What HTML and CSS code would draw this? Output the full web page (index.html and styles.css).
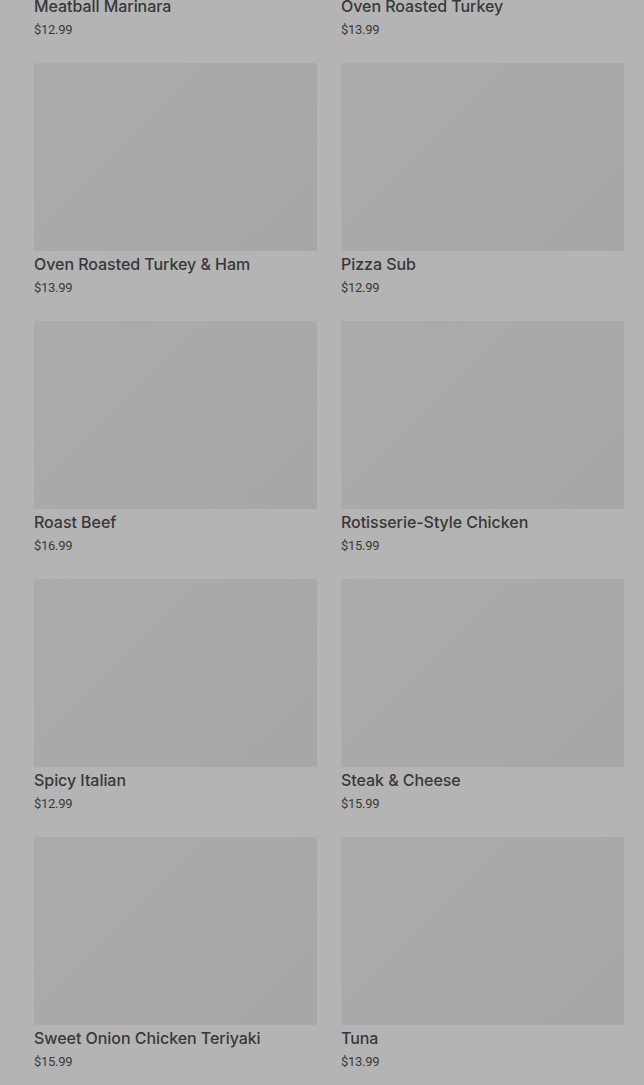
FILE: index.html
```html
<!DOCTYPE html>
<html>
<head>
<meta charset="utf-8">
<link rel="stylesheet" href="styles.css">
</head>
<body>
<main class="page">
  <div class="grid">
    <div class="card"><div class="thumb"></div><div class="name">Meatball Marinara</div><div class="price">$12.99</div></div>
    <div class="card"><div class="thumb"></div><div class="name">Oven Roasted Turkey</div><div class="price">$13.99</div></div>
    <div class="card"><div class="thumb"></div><div class="name">Oven Roasted Turkey &amp; Ham</div><div class="price">$13.99</div></div>
    <div class="card"><div class="thumb"></div><div class="name">Pizza Sub</div><div class="price">$12.99</div></div>
    <div class="card"><div class="thumb"></div><div class="name">Roast Beef</div><div class="price">$16.99</div></div>
    <div class="card"><div class="thumb"></div><div class="name">Rotisserie-Style Chicken</div><div class="price">$15.99</div></div>
    <div class="card"><div class="thumb"></div><div class="name">Spicy Italian</div><div class="price">$12.99</div></div>
    <div class="card"><div class="thumb"></div><div class="name">Steak &amp; Cheese</div><div class="price">$15.99</div></div>
    <div class="card"><div class="thumb"></div><div class="name">Sweet Onion Chicken Teriyaki</div><div class="price">$15.99</div></div>
    <div class="card"><div class="thumb"></div><div class="name">Tuna</div><div class="price">$13.99</div></div>
  </div>
</main>
</body>
</html>
```
FILE: styles.css
```css
html, body {
  margin: 0;
  padding: 0;
  background: #b4b4b4;
  overflow: hidden;
}
.page {
  height: 1085px;
  overflow: hidden;
}
.grid {
  display: grid;
  grid-template-columns: 283px 283px;
  column-gap: 24px;
  row-gap: 23px;
  padding: 0 20px 0 34px;
  margin-top: -195px;
}
.card {
  display: flex;
  flex-direction: column;
}
.thumb {
  height: 188px;
  background: linear-gradient(135deg, #ababab 0%, #a7a7a7 100%);
  margin-bottom: 1px;
}
.name {
  font-family: Inter, Roboto, "Liberation Sans", sans-serif;
  font-weight: 500;
  font-size: 16px;
  line-height: 24px;
  color: #383838;
  letter-spacing: -0.05px;
}
.price {
  font-family: Roboto, "Liberation Sans", sans-serif;
  font-size: 13px;
  line-height: 20px;
  margin-top: 2px;
  color: #3a3a3a;
  letter-spacing: -0.3px;
}
```
